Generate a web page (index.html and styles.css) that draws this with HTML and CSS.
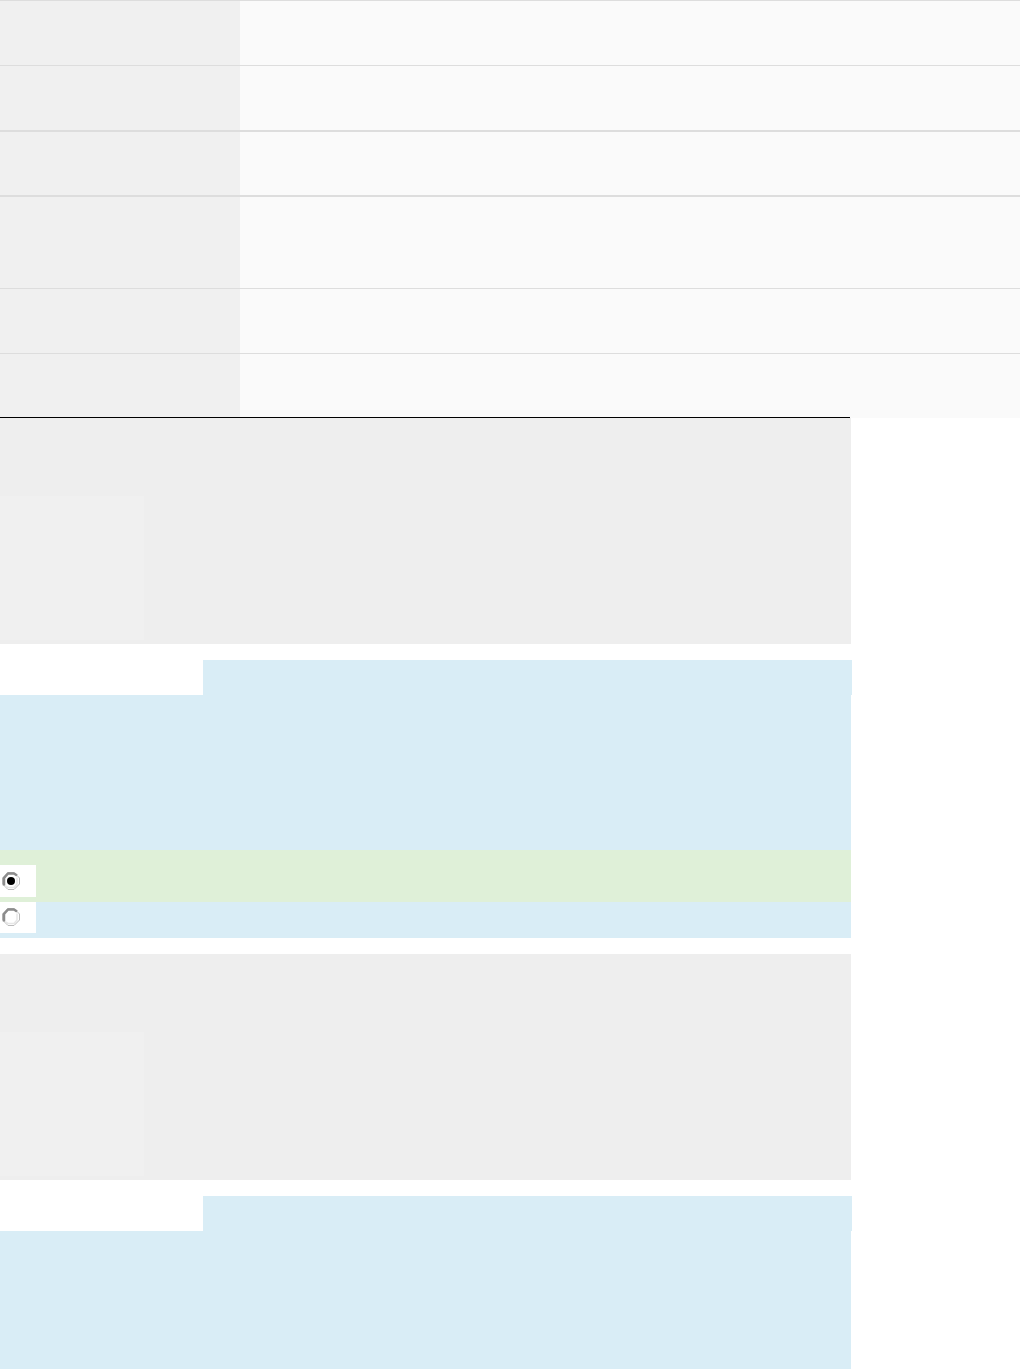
FILE: index.html
```
<!DOCTYPE html>
<html lang="en">
<head>
    <meta charset="UTF-8">
    <title>Quiz review</title>
    <link rel="stylesheet" href="styles.css">
</head>
<body>

<div class="summary">
    <div class="row"><div class="label"></div><div class="value"></div></div>
    <div class="row"><div class="label"></div><div class="value"></div></div>
    <div class="row thick"><div class="label"></div><div class="value"></div></div>
    <div class="row thick tall"><div class="label"></div><div class="value"></div></div>
    <div class="row"><div class="label"></div><div class="value"></div></div>
    <div class="row"><div class="label"></div><div class="value"></div></div>
    <div class="rule"></div>
</div>

<div class="question">
    <div class="info"><div class="info-box"></div></div>
    <div class="heading"></div>
    <div class="formulation"></div>
    <div class="answer correct">
        <div class="choice">
            <svg width="20" height="20" viewBox="0 0 20 20">
                <path d="M7 1.5H13L18.5 7V13L13 18.5H7L1.5 13V7Z" fill="#fff" stroke="#bbb"/>
                <path d="M16 6.5V13L13 16.5H7L4.5 15" fill="none" stroke="#e6e6e6" stroke-width="1.5"/>
                <path d="M3 14.5V7L7 2.5H13L16 4.5" fill="none" stroke="#8c8c8c" stroke-width="2.5"/>
                <circle cx="10" cy="10" r="4" fill="#000"/>
            </svg>
        </div>
    </div>
    <div class="answer">
        <div class="choice">
            <svg width="20" height="20" viewBox="0 0 20 20">
                <path d="M7 1.5H13L18.5 7V13L13 18.5H7L1.5 13V7Z" fill="#fff" stroke="#bbb"/>
                <path d="M16 6.5V13L13 16.5H7L4.5 15" fill="none" stroke="#e6e6e6" stroke-width="1.5"/>
                <path d="M3 14.5V7L7 2.5H13L16 4.5" fill="none" stroke="#8c8c8c" stroke-width="2.5"/>
            </svg>
        </div>
    </div>
</div>

<div class="question">
    <div class="info"><div class="info-box"></div></div>
    <div class="heading"></div>
    <div class="formulation"></div>
</div>

</body>
</html>
```
FILE: styles.css
```
* {
    box-sizing: border-box;
}
body {
    margin: 0;
    background: #fff;
    font-family: "Liberation Sans", sans-serif;
}
.summary {
    position: relative;
    width: 1020px;
    height: 418px;
    background: #fafafa;
}
.row {
    display: flex;
    height: 65px;
    border-top: 1px solid #ddd;
}
.row.thick {
    border-top-width: 2px;
}
.row.tall {
    height: 93px;
}
.label {
    width: 240px;
    background: #f0f0f0;
}
.value {
    flex: 1;
    background: #fafafa;
}
/* closing line over the bottom edge of the table */
.rule {
    position: absolute;
    left: 0;
    bottom: 0;
    width: 850px;
    height: 1px;
    background: #000;
}
.question {
    width: 851px;
    margin-bottom: 16px;
}
.info {
    height: 226px;
    padding-top: 78px;
    margin-bottom: 16px;
    background: #eee;
}
.info-box {
    width: 144px;
    height: 144px;
    background: #f0f0f0;
}
.heading {
    width: 649px;
    height: 35px;
    margin-left: 203px;
    background: #d9edf6;
}
.formulation {
    height: 155px;
    background: #d9edf6;
}
.question:last-child {
    margin-bottom: 0;
}
.question:last-child .formulation {
    height: 138px;
}
.answer {
    height: 36px;
    background: #d9edf6;
}
.answer.correct {
    height: 52px;
    padding-top: 15px;
    background: #dff0d8;
}
.choice {
    display: flex;
    width: 36px;
    height: 31px;
    padding: 5px 0 0 1px;
    background: #fff;
}
.correct .choice {
    height: 32px;
    padding-top: 6px;
}
```
